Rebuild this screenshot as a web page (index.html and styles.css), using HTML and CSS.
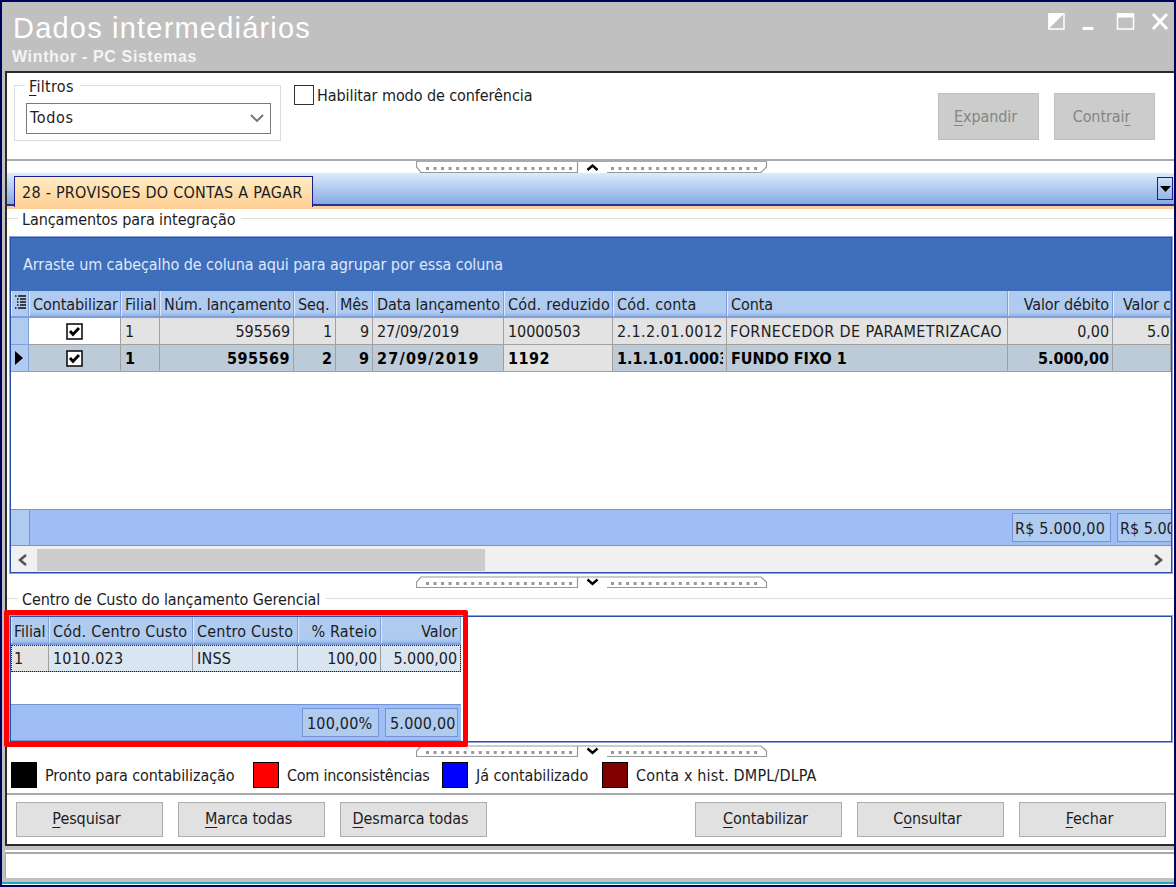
FILE: index.html
```
<!DOCTYPE html>
<html lang="pt-BR">
	<head>
		<meta charset="utf-8"/>
		<title>Dados intermediários</title>
		<link rel="stylesheet" href="styles.css">
	</head>
	<body>
		<div class="window">
			<div class="titlebar">
				<div>
					<div class="title">Dados intermediários</div>
					<div class="subtitle">Winthor - PC Sistemas</div>
				</div>
				<svg class="winbuttons" width="124" height="24" viewBox="0 0 124 24">
					<rect x="1" y="4" width="15" height="15" fill="none" stroke="#fff" stroke-width="1.5"/>
					<path d="M0.5 3.5H16L0.5 19Z" fill="#fff"/>
					<rect x="34.5" y="17" width="11" height="3" fill="#fff"/>
					<rect x="69.5" y="4" width="16" height="15" fill="none" stroke="#fff" stroke-width="1.5"/>
					<rect x="69" y="3.5" width="17" height="4" fill="#fff"/>
					<path d="M105 4L119 19M119 4L105 19" stroke="#fff" stroke-width="3"/>
				</svg>
			</div>

			<div class="content">
				<div class="filters">
					<div class="groupbox">
						<span class="legend"><u>F</u>iltros</span>
						<div class="select">
							<span>Todos</span>
							<svg width="14" height="8" viewBox="0 0 14 8"><path d="M1 1L7 7L13 1" fill="none" stroke="#707070" stroke-width="1.8"/></svg>
						</div>
					</div>
					<div class="check"><i></i><span>Habilitar modo de conferência</span></div>
					<div class="filter-buttons">
						<div class="btn disabled"><span><u>E</u>xpandir</span></div>
						<div class="btn disabled"><span>Contrai<u>r</u></span></div>
					</div>
				</div>

				<div class="split split-top">
					<svg width="352" height="13" viewBox="0 0 352 13">
						<path d="M0.5 0V6L5 11.5H161.5V0M191 11.5H345L350.5 6V0" fill="none" stroke="#989898" stroke-width="1.2"/>
						<path d="M0 0.5H351" stroke="#a9a9a9"/>
						<path d="M10 7.5H158M195 7.5H342" stroke="#9a9a9a" stroke-width="3" stroke-dasharray="3 4.53"/>
						<path d="M171.5 9L176.5 4.5L181.5 9" fill="none" stroke="#000" stroke-width="2.4"/>
					</svg>
				</div>

				<div class="tabs">
					<div class="tab"><span>28 - PROVISOES DO CONTAS A PAGAR</span></div>
					<div class="tab-menu"><svg width="11" height="6" viewBox="0 0 11 6"><path d="M0 0H11L5.5 6Z"/></svg></div>
				</div>
				<div class="tab-line"></div>

				<div class="group-title"><span>Lançamentos para integração</span></div>

				<div class="grid main-grid">
					<div class="group-panel"><span>Arraste um cabeçalho de coluna aqui para agrupar por essa coluna</span></div>
					<div class="row head">
						<div class="ind"><svg width="11" height="14" viewBox="0 0 11 14"><path d="M0 1H1.5M3 1H11M2 4H3.5M5 4H11M2 7H3.5M5 7H11M2 10H3.5M5 10H11M0 13H1.5M3 13H11" stroke="#111" stroke-width="1.5"/></svg></div>
						<div>Contabilizar</div>
						<div>Filial</div>
						<div>Núm. lançamento</div>
						<div>Seq.</div>
						<div>Mês</div>
						<div>Data lançamento</div>
						<div class="wide">Cód. reduzido</div>
						<div class="wide">Cód. conta</div>
						<div>Conta</div>
						<div class="r">Valor débito</div>
						<div class="cut">Valor c</div>
					</div>
					<div class="row">
						<div class="ind"></div>
						<div class="white"><svg class="cb" width="17" height="17" viewBox="0 0 17 17"><rect x="1" y="1" width="15" height="15" fill="#fff" stroke="#111" stroke-width="1.6"/><path d="M4 8L7 11.5L13 5" fill="none" stroke="#000" stroke-width="2.8"/></svg></div>
						<div>1</div>
						<div class="r">595569</div>
						<div class="r">1</div>
						<div class="r">9</div>
						<div>27/09/2019</div>
						<div>10000503</div>
						<div class="code">2.1.2.01.0012</div>
						<div class="name">FORNECEDOR DE PARAMETRIZACAO</div>
						<div class="r">0,00</div>
						<div class="last">5.0</div>
					</div>
					<div class="row current">
						<div class="ind"><svg width="8" height="14" viewBox="0 0 8 14"><path d="M0 0L8 7L0 14Z"/></svg></div>
						<div><svg class="cb" width="17" height="17" viewBox="0 0 17 17"><rect x="1" y="1" width="15" height="15" fill="#fff" stroke="#111" stroke-width="1.6"/><path d="M4 8L7 11.5L13 5" fill="none" stroke="#000" stroke-width="2.8"/></svg></div>
						<div>1</div>
						<div class="r num">595569</div>
						<div class="r">2</div>
						<div class="r">9</div>
						<div class="date">27/09/2019</div>
						<div class="focus">1192</div>
						<div class="clip"><span>1.1.1.01.0003</span></div>
						<div>FUNDO FIXO 1</div>
						<div class="r">5.000,00</div>
						<div></div>
					</div>
					<div class="blank"></div>
					<div class="footer">
						<div class="foot-ind"></div>
						<div class="sum sum-1"><span>R$ 5.000,00</span></div>
						<div class="sum sum-2"><span>R$ 5.00</span></div>
					</div>
					<div class="scroll">
						<svg width="9" height="12" viewBox="0 0 9 12"><path d="M8 1L2 6L8 11" fill="none" stroke="#555" stroke-width="2.6"/></svg>
						<div class="thumb"></div>
						<svg class="right" width="9" height="12" viewBox="0 0 9 12"><path d="M1 1L7 6L1 11" fill="none" stroke="#555" stroke-width="2.6"/></svg>
					</div>
				</div>

				<div class="split split-mid">
					<svg width="352" height="13" viewBox="0 0 352 13">
						<path d="M161.5 1V11.5H0.5V6L5 1H345L350.5 6V11.5H191" fill="none" stroke="#989898" stroke-width="1.2"/>
						<path d="M10 7.5H158M195 7.5H342" stroke="#9a9a9a" stroke-width="3" stroke-dasharray="3 4.53"/>
						<path d="M171.5 3.5L176.5 8L181.5 3.5" fill="none" stroke="#000" stroke-width="2.4"/>
					</svg>
				</div>

				<div class="group-title second"><span>Centro de Custo do lançamento Gerencial</span></div>

				<div class="grid cost-grid">
					<div class="cost-table">
						<div class="row head">
							<div>Filial</div>
							<div class="wide">Cód. Centro Custo</div>
							<div class="wide">Centro Custo</div>
							<div class="r wide">% Rateio</div>
							<div class="r">Valor</div>
						</div>
						<div class="row selected">
							<div class="focus">1</div>
							<div class="acc">1010.023</div>
							<div class="acc">INSS</div>
							<div class="r">100,00</div>
							<div class="r">5.000,00</div>
						</div>
						<div class="blank"></div>
						<div class="footer">
							<div class="sum sum-3"><span>100,00%</span></div>
							<div class="sum sum-4"><span>5.000,00</span></div>
						</div>
					</div>
					<div class="highlight"></div>
				</div>

				<div class="split split-low">
					<svg width="352" height="13" viewBox="0 0 352 13">
						<path d="M161.5 1V11.5H0.5V6L5 1H345L350.5 6V11.5H191" fill="none" stroke="#989898" stroke-width="1.2"/>
						<path d="M10 7.5H158M195 7.5H342" stroke="#9a9a9a" stroke-width="3" stroke-dasharray="3 4.53"/>
						<path d="M171.5 3.5L176.5 8L181.5 3.5" fill="none" stroke="#000" stroke-width="2.4"/>
					</svg>
				</div>

				<div class="colors">
					<div class="color c1"><i></i><span>Pronto para contabilização</span></div>
					<div class="color c2"><i></i><span>Com inconsistências</span></div>
					<div class="color c3"><i></i><span>Já contabilizado</span></div>
					<div class="color c4"><i></i><span>Conta x hist. DMPL/DLPA</span></div>
				</div>

				<div class="actions">
					<div class="btn"><span><u>P</u>esquisar</span></div>
					<div class="btn"><span><u>M</u>arca todas</span></div>
					<div class="btn"><span><u>D</u>esmarca todas</span></div>
					<div class="btn push"><span><u>C</u>ontabilizar</span></div>
					<div class="btn"><span>C<u>o</u>nsultar</span></div>
					<div class="btn"><span><u>F</u>echar</span></div>
				</div>
			</div>

			<div class="status"></div>
		</div>
	</body>
</html>
```
FILE: styles.css
```
* {
	box-sizing : border-box;
}

body {
	margin      : 0;
	font-family : "DejaVu Sans Condensed", "DejaVu Sans", sans-serif;
	font-stretch: condensed;
	font-size   : 16px;
	line-height : 20px;
	letter-spacing : -0.08px;
	color       : #1c1c24;
	white-space : nowrap;
}

u {
	text-underline-offset : 3px;
	text-decoration-thickness : 1px;
	text-decoration-skip-ink : none;
}

svg {
	display : block;
}

.window {
	display        : flex;
	flex-direction : column;
	width      : 1176px;
	height     : 887px;
	border     : 2px solid #00005e;
	background : #c0c0c0;
	overflow   : hidden;
}

.window > * {
	flex : none;
}

.titlebar {
	display         : flex;
	justify-content : space-between;
	height  : 69px;
	padding : 8px 2px 0 10px;
	color   : #fff;
	font-family : "Liberation Sans", Arial, sans-serif;
}

.title {
	font-size   : 29px;
	line-height : 36px;
	padding-left : 1px;
	letter-spacing : 1.2px;
}

.subtitle {
	font-size   : 16px;
	font-weight : bold;
	line-height : 22px;
	letter-spacing : 0.65px;
	color : #f4f4f4;
}

.content {
	height      : 775px;
	margin-left : 3px;
	border      : solid #2b2b2b;
	border-width : 2px 0 2px 2px;
	background  : #fff;
}

/* filters */

.filters {
	display : flex;
	height  : 88px;
	padding : 12px 19px 0 7px;
	border-bottom : 2px solid #a9a9a9;
}

.groupbox {
	position : relative;
	width    : 267px;
	height   : 56px;
	padding  : 17px 0 0 11px;
	border   : 1px solid #dcdcdc;
}

.legend {
	position : absolute;
	top  : -9px;
	left : 10px;
	padding : 0 6px 0 4px;
	background : #fff;
	letter-spacing : 0.3px;
}

.select {
	display         : flex;
	align-items     : center;
	justify-content : space-between;
	width   : 245px;
	height  : 31px;
	padding : 0 6px 1px 3px;
	border  : 1px solid #7a7a7a;
	letter-spacing : 0.7px;
}

.check {
	display     : flex;
	gap         : 3px;
	height      : 20px;
	margin-left : 13px;
	line-height : 21px;
}

.check i {
	width  : 20px;
	height : 20px;
	border : 1px solid #333;
}

.filter-buttons {
	display     : flex;
	gap         : 15px;
	margin-left : auto;
	padding-top : 8px;
}

.btn {
	display         : flex;
	align-items     : center;
	justify-content : center;
	width      : 147px;
	height     : 35px;
	padding    : 0 6px 1px 0;
	border     : 1px solid #adadad;
	background : #e1e1e1;
}

.btn.disabled {
	width      : 101px;
	height     : 47px;
	padding-bottom : 0;
	border     : 1px solid #bfbfbf;
	background : #ccc;
	color      : #858585;
}

.split {
	display : flex;
	padding-left : 409px;
}

.split-top { height : 12px; }
.split-mid { height : 17px; padding-top : 2px; }
.split-low { height : 19px; padding-top : 2px; }

/* tabs */

.tabs {
	display    : flex;
	height     : 33px;
	padding    : 3px 0 0 7px;
	background : linear-gradient(#dcebff, #86abe0);
	border-bottom : 2px solid #2330a0;
}

.tab {
	width      : 299px;
	height     : 31px;
	padding    : 6px 0 0 7px;
	border     : 1px solid #1c1c8e;
	border-bottom : 0;
	background : linear-gradient(#ffedc4, #ffd096);
	letter-spacing : 0.25px;
}

.tab-menu {
	display         : flex;
	align-items     : center;
	justify-content : center;
	width       : 16px;
	height      : 23px;
	margin      : 1px 1px 0 auto;
	border      : 1px solid #1c1c9e;
}

.tab-line {
	height     : 3px;
	background : #ffd096;
}

.group-title {
	height     : 27px;
	line-height : 21px;
	padding-left : 11px;
	background : linear-gradient(#dcdcdc, #dcdcdc) 0 9px / 100% 1px no-repeat;
}

.group-title.second {
	height : 24px;
	background-position : 0 7px;
	line-height : 18px;
}

.group-title span {
	display : inline-block;
	padding : 0 6px 0 4px;
	background : #fff;
}

/* grids */

.grid {
	position   : relative;
	width      : 1162px;
	margin     : 1px 0 1px 3px;
	border     : 1px solid #2650ac;
	box-shadow : 0 0 0 1px #8fa6dc;
}

.main-grid { height : 336px; }
.cost-grid { height : 126px; }

.group-panel {
	height      : 53px;
	padding     : 17px 0 0 12px;
	background  : #3f6eba;
	color       : #dfe9fb;
}

.row {
	display  : grid;
	height   : 27px;
	overflow : hidden;
}

.main-grid .row {
	grid-template-columns : 18px 92px 39px 134px 42px 37px 131px 109px 114px 281px 105px 58px;
}

.row > div {
	padding      : 4px 3px 0 4px;
	border-right : 1px solid #a0a0a0;
	border-bottom : 1px solid #a0a0a0;
	background   : #e3e3e3;
	overflow     : hidden;
}

.row .r {
	text-align : right;
}

.row.head {
	height : 28px;
}

.row.head > div {
	padding-top : 5px;
	border-right : 1px solid #7f9fdc;
	border-bottom : 2px solid #7f9fdc;
	background  : linear-gradient(#b0cbf0 85%, #93b3e8);
	box-shadow  : inset 1px 0 #dbe8fb;
}

.main-grid .row.head {
	height : 27px;
}

.main-grid .row.head > div {
	padding-top : 4px;
}

.row.head > .wide {
	letter-spacing : 0.2px;
}

.row > .ind,
.row.head > .ind {
	padding : 6px 0 0 4px;
	border-color : #7f9fdc;
	background   : #b0cbf0;
}

.row > .white { background : #fff; }

.row > div > .cb {
	margin : 1px 0 0 33px;
}

.row.current > div:not(.ind) {
	background  : #bdcbd8;
	font-weight : bold;
	letter-spacing : 0;
	color : #000;
}

.row.current > div.num { letter-spacing : 0.5px; }
.row.current > div.date { letter-spacing : 1.2px; }

.row.current > div.focus,
.row.selected > div.focus {
	background : #e3e3e3;
}

.row.current > div.focus { letter-spacing : 0.5px; }

.row > .code { letter-spacing : 0.4px; }

.row > .name { padding-left : 3px; letter-spacing : 0.36px; }

.clip span {
	display  : block;
	overflow : hidden;
}

.row > .last {
	padding-left : 34px;
	padding-right : 0;
}

.row.head > .cut {
	padding-left : 10px;
	padding-right : 0;
}

.main-grid .blank { height : 137px; }

.footer {
	display : flex;
	height  : 37px;
	border-top : 1px solid #7395d6;
	border-bottom : 1px solid #7395d6;
	background : #9fbdf5;
	overflow : hidden;
}

.foot-ind {
	width : 19px;
	border-right : 1px solid #7395d6;
	background : #b0cbf0;
}

.sum {
	flex    : none;
	height  : 29px;
	margin-top : 3px;
	padding : 5px 2px 0 2px;
	border  : 1px solid #7395d6;
	background : #b0cbf0;
	letter-spacing : 0.2px;
	overflow : hidden;
}

.sum-1 { width : 99px; margin-left : auto; }
.sum-2 { width : 54px; margin-left : 6px; border-right : 0; padding-right : 0; letter-spacing : 0; }
.sum-3 { width : 77px; margin-left : 291px; padding-left : 4px; }
.sum-4 { width : 73px; margin-left : 6px; padding-left : 4px; }

.sum span {
	display  : block;
	overflow : hidden;
}

.scroll {
	display     : flex;
	align-items : center;
	height      : 26px;
	padding     : 2px 8px 1px 7px;
	background  : #f0f0f0;
}

.thumb {
	width  : 448px;
	height : 22px;
	margin-left : 10px;
	background  : #cdcdcd;
}

.scroll .right { margin-left : auto; }

/* cost center */

.cost-table {
	width : 450px;
}

.cost-table .row {
	grid-template-columns : 38px 144px 105px 83px 80px;
}

.cost-table .row.head > div {
	padding-left : 3px;
}

.cost-table .row.head > .wide {
	padding-left : 4px;
}

.cost-table .row.selected {
	position : relative;
}

.row.selected > div {
	background : #d9e5f1;
	padding-left : 3px;
}

.row.selected > .acc {
	padding-left : 4px;
	letter-spacing : 0.2px;
}

.row.selected::after {
	content  : "";
	position : absolute;
	inset    : 0;
	border   : 1px dotted #222;
}

.cost-table .blank { height : 32px; }

.highlight {
	position : absolute;
	top    : -7px;
	left   : -7px;
	width  : 464px;
	height : 137px;
	border : 5px solid #f00;
	border-radius : 2px;
}

/* legend of colors */

.colors {
	display : flex;
	height  : 31px;
}

.color {
	display : flex;
	gap     : 8px;
	line-height : 28px;
}

.color i {
	width  : 26px;
	height : 26px;
	border : 1px solid #000;
}

.c1 { width : 242px; margin-left : 4px; }
.c2 { width : 189px; letter-spacing : -0.25px; }
.c3 { width : 160px; }
.c4 { letter-spacing : 0.15px; }
.c1 i { background : #000; }
.c2 i { background : #f00; }
.c3 i { background : #00f; }
.c4 i { background : #800000; }

.actions {
	display : flex;
	gap     : 15px;
	height  : 50px;
	padding : 7px 8px 0 9px;
	border-top : 2px solid #a9a9a9;
}

.actions .push { margin-left : auto; }

.status {
	height     : 26px;
	margin     : 6px 0 0 3px;
	border-top : 2px solid #a9a9a9;
	border-left : 1px solid #a9a9a9;
	background : #fff;
	box-shadow : 0 -2px #fff;
}

.window::after {
	content    : "";
	flex       : none;
	height     : 3px;
	margin-top : 4px;
	border-top : 2px solid #1fa5bd;
	background : #fff;
}
```
